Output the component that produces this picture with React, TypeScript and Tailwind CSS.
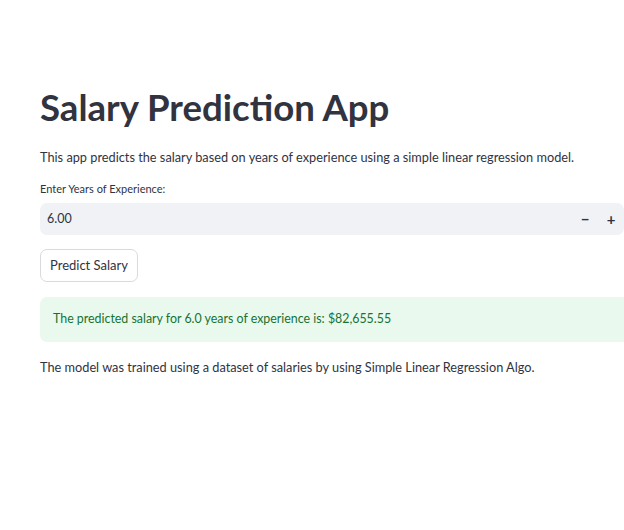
export default function App() {
  return (
    <div
      className="w-[624px] h-[530px] bg-white overflow-hidden text-[#31333f]"
      style={{ fontFamily: "Lato, 'Open Sans', sans-serif" }}
    >
      <div className="pl-[40px] pt-[87px] w-[700px]">
        <h1 className="text-[36.6px] font-bold leading-[40px] text-[#31333f]">
          Salary Prediction App
        </h1>
        <p className="mt-[21px] text-[12.75px] leading-[18px]">
          This app predicts the salary based on years of experience using a simple linear regression model.
        </p>
        <div className="mt-[16px] text-[11px] leading-[14px]">Enter Years of Experience:</div>
        <div className="mt-[7px] w-[584px] h-[32px] rounded-[7px] bg-[#f0f2f6] flex items-center pl-[7px]">
          <span className="flex-1 text-[12.5px]">6.00</span>
          <span className="w-[26px] text-center text-[15px] font-bold">−</span>
          <span className="w-[26px] text-center text-[15px] font-bold">+</span>
        </div>
        <button className="mt-[14px] h-[33px] px-[9px] border border-[#d9dadd] rounded-[7px] bg-white text-[13px]">
          Predict Salary
        </button>
        <div className="mt-[15px] w-[600px] h-[45px] rounded-[7px] bg-[#e9f9ee] flex items-center pl-[13px] text-[12.4px] text-[#177233]">
          The predicted salary for 6.0 years of experience is: $82,655.55
        </div>
        <p className="mt-[16px] text-[12.75px] leading-[18px]">
          The model was trained using a dataset of salaries by using Simple Linear Regression Algo.
        </p>
      </div>
    </div>
  );
}
